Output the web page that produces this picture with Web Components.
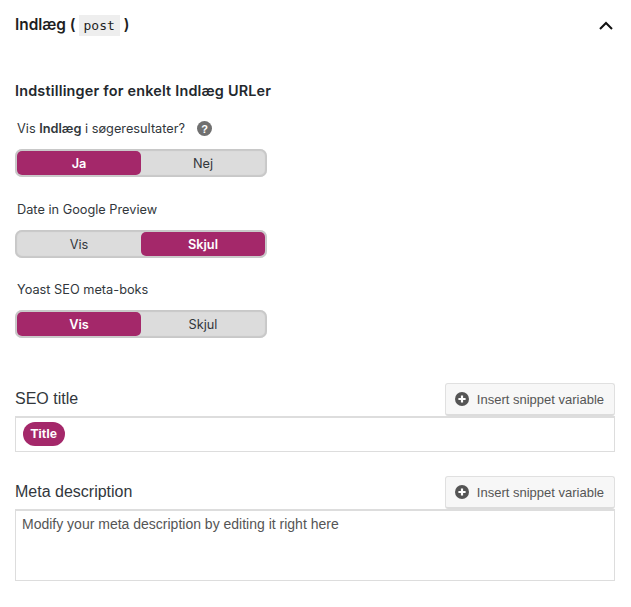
<!DOCTYPE html>
<html lang="da">
<head>
<meta charset="utf-8">
<title>Indlæg</title>
<style>
  html, body { margin: 0; background: #fff; }
  body { font-family: Inter, "Liberation Sans", sans-serif; color: #23282d; }
</style>
</head>
<body>
<search-settings></search-settings>

<template id="switch-tpl">
  <style>
    :host { display: block; }
    .label { display: flex; align-items: center; height: 16px; padding-left: 2px; font-size: 12.75px; color: #32373c; gap: 12px; }
    .track { display: flex; width: 252px; height: 28px; box-sizing: border-box; margin-top: 13px; padding: 2px; background: #dcdcdc; border-radius: 7px; box-shadow: inset 0 0 1px 2px #c8c8c8; }
    .opt { flex: 1; display: flex; align-items: center; justify-content: center; font-size: 12.75px; color: #32373c; border-radius: 5px; }
    .opt.on { background: #a4286a; color: #fff; font-weight: 600; }
    svg { display: block; }
  </style>
  <div class="label"><span><slot></slot></span><slot name="help"></slot></div>
  <div class="track"><div class="opt a"></div><div class="opt b"></div></div>
</template>

<template id="field-tpl">
  <style>
    :host { display: block; font-family: "Liberation Sans", sans-serif; }
    .head { display: flex; justify-content: space-between; align-items: center; height: 33px; }
    .name { font-size: 16px; color: #32373c; margin-bottom: 2px; }
    button { display: flex; align-items: center; height: 33px; box-sizing: border-box; padding: 0 10px 0 9px; gap: 8px; font: 13px "Liberation Sans", sans-serif; color: #555; background: #f7f7f7; border: 1px solid #e0e0e0; border-bottom: 2px solid #dcdcdc; border-radius: 3px; }
    .box { box-sizing: border-box; border: 1px solid #ddd; border-top-width: 2px; padding: 5px 6px; font-size: 14px; color: #555; }
  </style>
  <div class="head">
    <span class="name"></span>
    <button type="button">
      <svg width="14" height="14" viewBox="0 0 14 14"><circle cx="7" cy="7" r="7" fill="#555"/><path d="M7 3.4v7.2M3.4 7h7.2" stroke="#fff" stroke-width="2.2"/></svg>
      Insert snippet variable
    </button>
  </div>
  <div class="box"><slot></slot></div>
</template>

<script>
class ToggleSwitch extends HTMLElement {
  constructor() {
    super();
    this.attachShadow({ mode: 'open' });
    this.shadowRoot.appendChild(document.getElementById('switch-tpl').content.cloneNode(true));
  }
  connectedCallback() {
    const [a, b] = this.getAttribute('options').split('|');
    const on = this.getAttribute('selected');
    const optA = this.shadowRoot.querySelector('.a');
    const optB = this.shadowRoot.querySelector('.b');
    optA.textContent = a;
    optB.textContent = b;
    (on === a ? optA : optB).classList.add('on');
  }
}
customElements.define('toggle-switch', ToggleSwitch);

class SnippetField extends HTMLElement {
  constructor() {
    super();
    this.attachShadow({ mode: 'open' });
    this.shadowRoot.appendChild(document.getElementById('field-tpl').content.cloneNode(true));
  }
  connectedCallback() {
    this.shadowRoot.querySelector('.name').textContent = this.getAttribute('name');
    this.shadowRoot.querySelector('.box').style.height = this.getAttribute('box') + 'px';
  }
}
customElements.define('snippet-field', SnippetField);

class TitleChip extends HTMLElement {
  constructor() {
    super();
    this.attachShadow({ mode: 'open' });
    this.shadowRoot.innerHTML = `
      <style>
        :host { display: flex; width: max-content; box-sizing: border-box; align-items: center; height: 24px; margin: -1px 0 0 1px; padding: 0 7.5px 1px; border-radius: 12px; background: #a4286a; color: #fff; font: bold 13px "Liberation Sans", sans-serif; }
      </style>
      <slot></slot>`;
  }
}
customElements.define('title-chip', TitleChip);

class SearchSettings extends HTMLElement {
  constructor() {
    super();
    this.attachShadow({ mode: 'open' });
    this.shadowRoot.innerHTML = `
      <style>
        :host { display: block; padding: 14px 16px 0 15px; }
        header { display: flex; justify-content: space-between; align-items: center; height: 20px; font-size: 15.4px; font-weight: 600; color: #1e1e1e; }
        code { font: 13px "DejaVu Sans Mono", monospace; background: #eee; padding: 3px 5px 3px 4px; font-weight: 400; }
        h3 { margin: 47px 0 0; height: 20px; line-height: 20px; font-size: 14.4px; letter-spacing: .2px; font-weight: 600; color: #23282d; }
        toggle-switch { margin-top: 24px; }
        toggle-switch.first { margin-top: 19px; }
        toggle-switch.third { margin-top: 23px; }
        b { font-weight: 600; }
        .help { display: block; }
        .seo { margin-top: 45px; }
        .meta { margin-top: 24px; }
        svg.chev { margin: 2px 2px 0 0; }
      </style>
      <header>
        <span>Indlæg ( <code>post</code> )</span>
        <svg class="chev" width="14" height="9" viewBox="0 0 14 9"><path d="M1 8l6-6 6 6" fill="none" stroke="#111" stroke-width="2"/></svg>
      </header>
      <h3>Indstillinger for enkelt Indlæg URLer</h3>
      <toggle-switch class="first" options="Ja|Nej" selected="Ja">Vis <b>Indlæg</b> i søgeresultater?
        <svg slot="help" class="help" width="15" height="15" viewBox="0 0 15 15"><circle cx="7.5" cy="7.5" r="7.5" fill="#707070"/><text x="7.5" y="11.5" text-anchor="middle" font-family="Liberation Sans" font-weight="700" font-size="11" fill="#fff">?</text></svg>
      </toggle-switch>
      <toggle-switch options="Vis|Skjul" selected="Skjul">Date in Google Preview</toggle-switch>
      <toggle-switch class="third" options="Vis|Skjul" selected="Vis">Yoast SEO meta-boks</toggle-switch>
      <snippet-field class="seo" name="SEO title" box="36"><title-chip>Title</title-chip></snippet-field>
      <snippet-field class="meta" name="Meta description" box="72">Modify your meta description by editing it right here</snippet-field>`;
  }
}
customElements.define('search-settings', SearchSettings);
</script>
</body>
</html>
